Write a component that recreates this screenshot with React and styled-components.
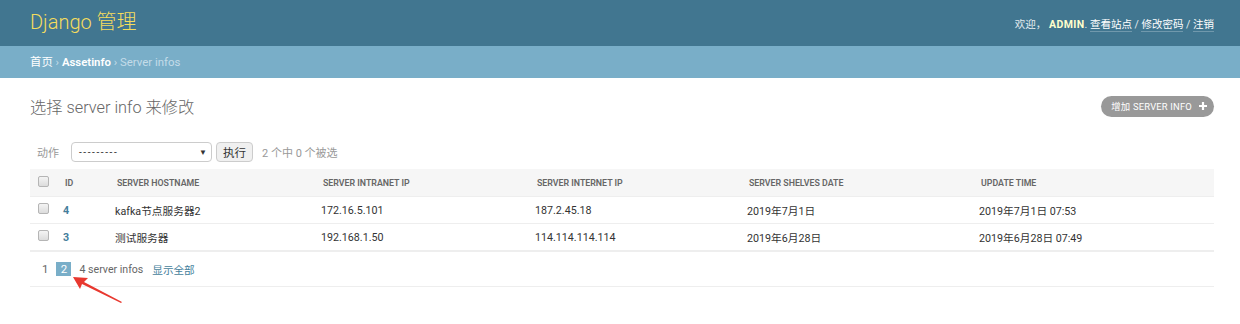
import styled, { createGlobalStyle } from "styled-components";

const GlobalStyle = createGlobalStyle`
  body {
    margin: 0;
    background: #fff;
    font-family: Roboto, "Liberation Sans", "Noto Sans CJK SC", sans-serif;
    color: #333;
    font-size: 11px;
  }
`;

const Page = styled.div`
  position: relative;
  width: 1240px;
  height: 324px;
  overflow: hidden;
`;

const Header = styled.div`
  height: 46px;
  background: #417690;
  padding: 0 26px 0 30px;
  display: flex;
  align-items: center;
  justify-content: space-between;
`;

const Branding = styled.h1`
  margin: 0 0 2px;
  font-size: 20px;
  font-weight: 300;
  color: #f5dd5d;
  line-height: 1;
`;

const UserTools = styled.div`
  font-size: 10.5px;
  color: #e3ecef;
  strong {
    color: #ffc;
    font-weight: 700;
    letter-spacing: 0.4px;
  }
  a {
    color: #fff;
    text-decoration: none;
    border-bottom: 1px solid rgba(255, 255, 255, 0.25);
  }
`;

const Breadcrumbs = styled.div`
  height: 32px;
  line-height: 32px;
  background: #79aec8;
  padding: 0 30px;
  font-size: 11.4px;
  color: #c4dce8;
  a {
    color: #fff;
    text-decoration: none;
  }
  b {
    font-weight: 600;
  }
`;

const Content = styled.div`
  padding: 0 26px 0 30px;
`;

const TitleRow = styled.div`
  display: flex;
  justify-content: space-between;
  align-items: center;
  margin-top: 17px;
  height: 22px;
`;

const Title = styled.h2`
  margin: 0;
  font-size: 16.3px;
  font-weight: 300;
  color: #666;
`;

const AddButton = styled.a`
  display: flex;
  align-items: center;
  gap: 6px;
  height: 21px;
  padding: 0 6px 0 10px;
  border-radius: 11px;
  background: #999;
  color: #fff;
  font-size: 9.4px;
  letter-spacing: 0.2px;
  text-transform: uppercase;
  text-decoration: none;
`;

const Actions = styled.div`
  display: flex;
  align-items: center;
  margin-top: 25px;
  height: 20px;
  font-size: 11px;
  color: #999;
`;

const ActionLabel = styled.span`
  margin: 0 12px 0 7px;
`;

const Select = styled.div`
  height: 18px;
  width: 128px;
  border: 1px solid #ccc;
  border-radius: 4px;
  display: flex;
  align-items: center;
  justify-content: space-between;
  padding: 0 4px 0 7px;
  color: #333;
  font-size: 10px;
  letter-spacing: 1.6px;
`;

const Caret = styled.span`
  font-size: 8px;
  letter-spacing: 0;
  color: #333;
`;

const GoButton = styled.button`
  margin-left: 4px;
  height: 20px;
  padding: 0 6px;
  border: 1px solid #ccc;
  border-radius: 4px;
  background: #f0f0f0;
  color: #333;
  font-family: inherit;
  font-size: 11.5px;
`;

const Counter = styled.span`
  margin-left: 9px;
  color: #999;
`;

const Table = styled.table`
  margin-top: 7px;
  width: 1184px;
  border-collapse: collapse;
  table-layout: fixed;
`;

const Th = styled.th`
  height: 27px;
  padding: 0 0 0 ${(p) => p.$pad || 10}px;
  background: #f6f6f6;
  text-align: left;
  font-size: 8.8px;
  font-weight: 600;
  color: #666;
  text-transform: uppercase;
`;

const Td = styled.td`
  height: 26px;
  padding: 0 0 0 ${(p) => p.$pad || 8}px;
  border-top: 1px solid #eee;
  font-size: 10.7px;
  color: #333;
  a {
    color: #447e9b;
    font-weight: 700;
    text-decoration: none;
  }
`;

const Row = styled.tr`
  &:last-child td {
    border-bottom: 2px solid #eee;
  }
`;

const Check = styled.span`
  display: inline-block;
  width: 9px;
  height: 9px;
  border: 1px solid #b5b5b5;
  border-radius: 2px;
  background: linear-gradient(#f4f4f4, #dcdcdc);
  vertical-align: middle;
  margin-top: -4px;
`;

const Paginator = styled.div`
  display: flex;
  align-items: center;
  height: 35px;
  border-bottom: 1px solid #eee;
  width: 1184px;
  font-size: 10.6px;
  color: #666;
  padding-left: 12px;
  box-sizing: border-box;
`;

const PageNum = styled.span`
  display: inline-flex;
  align-items: center;
  justify-content: center;
  min-width: ${(p) => (p.$current ? 15 : 0)}px;
  height: 14px;
  margin-right: 8px;
  background: ${(p) => (p.$current ? "#79aec8" : "transparent")};
  color: ${(p) => (p.$current ? "#fff" : "#666")};
  font-size: 11.5px;
`;

const ShowAll = styled.a`
  margin-left: 9px;
  color: #447e9b;
  text-decoration: none;
`;

const Arrow = styled.svg`
  position: absolute;
  left: 66px;
  top: 272px;
`;

const columns = [
  { label: "", width: 25, pad: 8 },
  { label: "ID", width: 52 },
  { label: "Server hostname", width: 206 },
  { label: "Server intranet ip", width: 214 },
  { label: "Server internet ip", width: 212 },
  { label: "Server shelves date", width: 232 },
  { label: "Update time", width: 243 },
];

const rows = [
  ["4", "kafka节点服务器2", "172.16.5.101", "187.2.45.18", "2019年7月1日", "2019年7月1日 07:53"],
  ["3", "测试服务器", "192.168.1.50", "114.114.114.114", "2019年6月28日", "2019年6月28日 07:49"],
];

export default function App() {
  return (
    <Page>
      <GlobalStyle />
      <Header>
        <Branding>Django 管理</Branding>
        <UserTools>
          欢迎， <strong>ADMIN</strong>. <a href="#">查看站点</a> / <a href="#">修改密码</a> / <a href="#">注销</a>
        </UserTools>
      </Header>
      <Breadcrumbs>
        <a href="#">首页</a> › <a href="#"><b>Assetinfo</b></a> › Server infos
      </Breadcrumbs>
      <Content>
        <TitleRow>
          <Title>选择 server info 来修改</Title>
          <AddButton href="#">
            增加 server info
            <svg width="10" height="10" viewBox="0 0 10 10">
              <path d="M5 1v8M1 5h8" stroke="#fff" strokeWidth="2.2" />
            </svg>
          </AddButton>
        </TitleRow>
        <Actions>
          <ActionLabel>动作</ActionLabel>
          <Select>
            <span>---------</span>
            <Caret>▼</Caret>
          </Select>
          <GoButton>执行</GoButton>
          <Counter>2 个中 0 个被选</Counter>
        </Actions>
        <Table>
          <colgroup>
            {columns.map((c, i) => (
              <col key={i} style={{ width: c.width }} />
            ))}
          </colgroup>
          <thead>
            <tr>
              {columns.map((c, i) => (
                <Th key={i} $pad={c.pad}>
                  {i === 0 ? <Check /> : c.label}
                </Th>
              ))}
            </tr>
          </thead>
          <tbody>
            {rows.map((r) => (
              <Row key={r[0]}>
                <Td $pad={8}>
                  <Check />
                </Td>
                <Td>
                  <a href="#">{r[0]}</a>
                </Td>
                {r.slice(1).map((v, i) => (
                  <Td key={i}>{v}</Td>
                ))}
              </Row>
            ))}
          </tbody>
        </Table>
        <Paginator>
          <PageNum>1</PageNum>
          <PageNum $current>2</PageNum>
          4 server infos
          <ShowAll href="#">显示全部</ShowAll>
        </Paginator>
      </Content>
      <Arrow width="64" height="36" viewBox="0 0 64 36">
        <path d="M7 5 L22 6 L18 10 L56 30 L55 31 L16 12 L14 17 Z" fill="#e8382f" />
      </Arrow>
    </Page>
  );
}
